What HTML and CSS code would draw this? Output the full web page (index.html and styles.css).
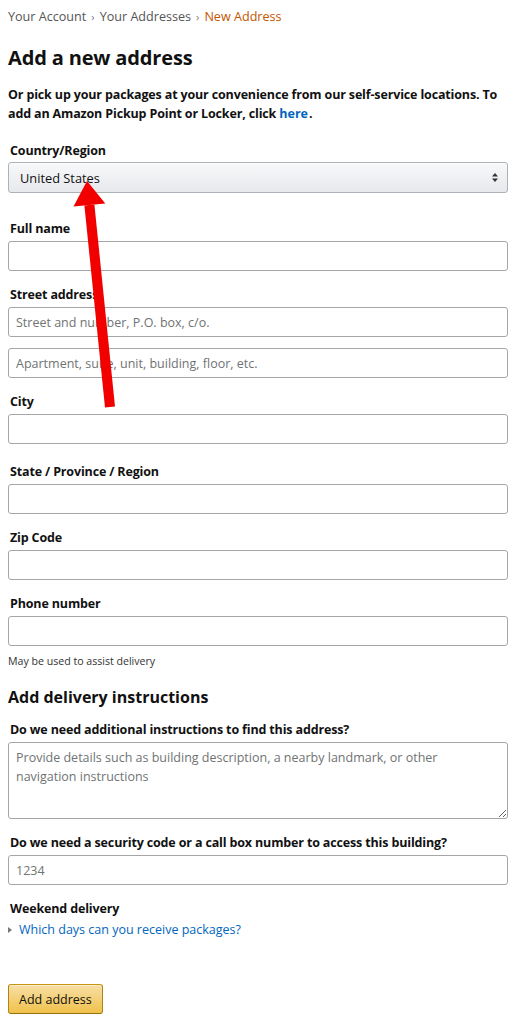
FILE: index.html
```html
<!DOCTYPE html>
<html lang="en">
<head>
<meta charset="utf-8">
<title>Add a new address</title>
<link rel="stylesheet" href="styles.css">
</head>
<body>
<div class="page">
  <nav class="crumbs">
    <a href="#">Your Account</a><span class="sep">›</span><a href="#">Your Addresses</a><span class="sep">›</span><span class="current">New Address</span>
  </nav>
  <h1 class="title">Add a new address</h1>
  <p class="intro">Or pick up your packages at your convenience from our self-service locations. To add an Amazon Pickup Point or Locker, click <a href="#">here</a>.</p>

  <div class="field country">
    <label class="label">Country/Region</label>
    <div class="select-wrap">
      <select class="select"><option>United States</option></select>
      <svg class="select-arrows" width="6" height="9" viewBox="0 0 6 9"><path d="M3 0 L6 3.5 H0 Z M0 5.5 H6 L3 9 Z" fill="#333"/></svg>
    </div>
  </div>

  <div class="field fullname">
    <label class="label">Full name</label>
    <input class="input" type="text">
  </div>

  <div class="field">
    <label class="label">Street address</label>
    <input class="input" type="text" placeholder="Street and number, P.O. box, c/o.">
    <input class="input second" type="text" placeholder="Apartment, suite, unit, building, floor, etc.">
  </div>

  <div class="field">
    <label class="label">City</label>
    <input class="input" type="text">
  </div>

  <div class="field state">
    <label class="label">State / Province / Region</label>
    <input class="input" type="text">
  </div>

  <div class="field">
    <label class="label">Zip Code</label>
    <input class="input" type="text">
  </div>

  <div class="field">
    <label class="label">Phone number</label>
    <input class="input" type="text">
    <div class="hint">May be used to assist delivery</div>
  </div>

  <h2 class="subtitle">Add delivery instructions</h2>

  <div class="field first-instr">
    <label class="label">Do we need additional instructions to find this address?</label>
    <textarea class="textarea" placeholder="Provide details such as building description, a nearby landmark, or other navigation instructions"></textarea>
  </div>

  <div class="field">
    <label class="label">Do we need a security code or a call box number to access this building?</label>
    <input class="input" type="text" placeholder="1234">
  </div>

  <div class="field weekend">
    <div class="label">Weekend delivery</div>
    <a class="expander" href="#"><span class="tri"></span>Which days can you receive packages?</a>
  </div>

  <button class="btn" type="button">Add address</button>
</div>

<svg class="annotation" width="521" height="1032" viewBox="0 0 521 1032">
  <polygon points="87,181 105.3,203.4 73.5,206.6" fill="#f20000"/>
  <polygon points="84.4,205.5 94.4,204.5 115,406.5 105,407.5" fill="#f20000"/>
</svg>
</body>
</html>
```
FILE: styles.css
```css
* { box-sizing: border-box; }
html, body { margin: 0; padding: 0; background: #fff; }
body {
  font-family: "Open Sans", "Noto Sans", "Liberation Sans", sans-serif;
  color: #111;
  font-size: 12.5px;
  line-height: 19px;
  position: relative;
}
.page {
  width: 508px;
  padding: 7px 0 20px 8px;
}
.crumbs {
  font-size: 12.6px;
  line-height: 19px;
  color: #555;
}
.crumbs a { color: #555; text-decoration: none; }
.crumbs .sep { margin: 0 5px; font-size: 11px; color: #777; }
.crumbs .current { color: #c45500; }
.title {
  margin: 18px 0 0;
  font-size: 20px;
  line-height: 28px;
  font-weight: 700;
  letter-spacing: -0.15px;
  color: #111;
}
.intro {
  margin: 13px 0 0;
  font-weight: 700;
  font-size: 12.5px;
  letter-spacing: -0.15px;
  line-height: 19px;
}
.intro a { color: #0066c0; text-decoration: none; letter-spacing: 0; margin-right: 1px; }
.field { margin-top: 14px; }
.country { margin-top: 18px; }
.country .label { margin-bottom: 2px; }
.fullname { margin-top: 26px; }
.state { margin-top: 18px; }
.label {
  display: block;
  font-weight: 700;
  font-size: 12.5px;
  letter-spacing: -0.15px;
  line-height: 19px;
  color: #111;
  margin: 0 0 3px 2px;
}
.select-wrap { position: relative; width: 500px; }
.select {
  display: block;
  appearance: none;
  -webkit-appearance: none;
  width: 500px;
  height: 31px;
  margin: 0;
  padding: 0 11px;
  border: 1px solid #adb1b8;
  border-radius: 3px;
  background: linear-gradient(#f7f8fa, #e7e9ec);
  box-shadow: 0 1px 0 rgba(255,255,255,.6) inset;
  font-family: inherit;
  font-size: 12.8px;
  color: #111;
}
.select-arrows {
  position: absolute;
  right: 10px;
  top: 11px;
}
.input {
  display: block;
  width: 500px;
  height: 30px;
  margin: 0;
  padding: 0 7px;
  border: 1px solid #a6a6a6;
  border-radius: 3px;
  font-family: inherit;
  font-size: 12.5px;
  color: #111;
  background: #fff;
}
.input::placeholder, .textarea::placeholder { color: #6f7373; opacity: 1; }
.input.second { margin-top: 11px; }
.hint {
  margin-top: 7px;
  font-size: 10.6px;
  line-height: 16px;
  color: #333;
}
.subtitle {
  margin: 16px 0 0;
  font-size: 16px;
  line-height: 24px;
  font-weight: 700;
  color: #111;
}
.first-instr { margin-top: 11px; }
.textarea {
  display: block;
  width: 500px;
  height: 77px;
  margin: 0;
  padding: 5px 7px;
  border: 1px solid #a6a6a6;
  border-radius: 3px;
  font-family: inherit;
  font-size: 12.5px;
  line-height: 19px;
  color: #111;
}
.weekend .label { margin-bottom: 2px; }
.expander {
  display: flex;
  align-items: center;
  color: #0066c0;
  text-decoration: none;
  font-size: 12.5px;
  line-height: 19px;
}
.tri {
  width: 0; height: 0;
  border-top: 3.5px solid transparent;
  border-bottom: 3.5px solid transparent;
  border-left: 4px solid #777;
  margin: 0 7px 0 0;
}
.btn {
  display: block;
  margin-top: 45px;
  height: 30px;
  padding: 0 10px;
  border: 1px solid #a88734;
  border-color: #c89411 #b0820f #99710d;
  border-radius: 3px;
  background: linear-gradient(#f7dfa5, #f0c14b);
  box-shadow: 0 1px 0 rgba(255,255,255,.4) inset;
  font-family: inherit;
  font-size: 12.5px;
  color: #111;
}
.annotation {
  position: absolute;
  left: 0;
  top: 0;
  pointer-events: none;
}
```
